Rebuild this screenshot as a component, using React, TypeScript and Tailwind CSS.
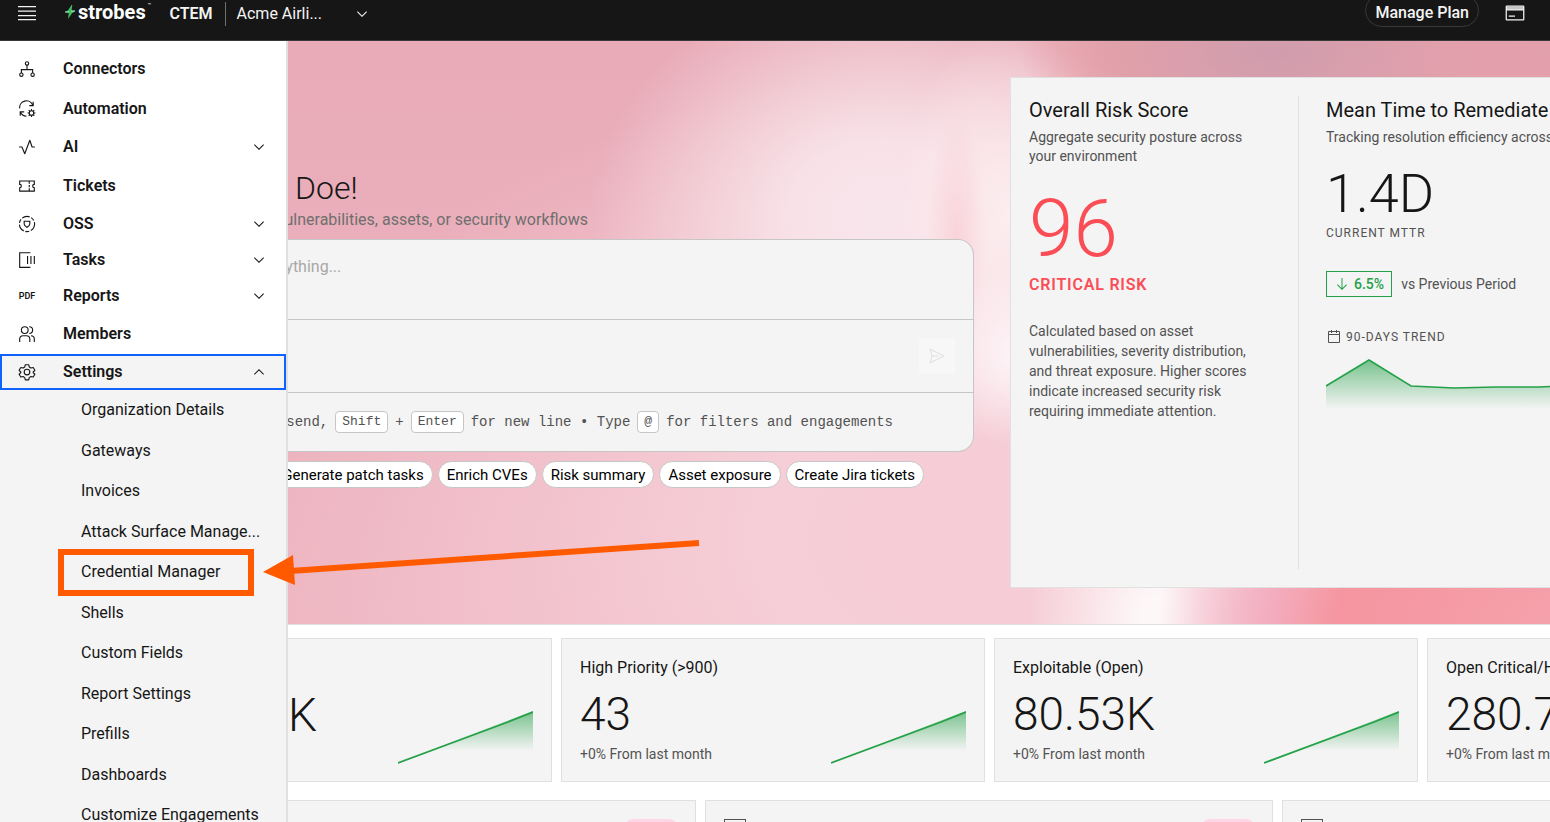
import type { ReactNode } from "react";

const menuItems = [
  { label: "Connectors", icon: "connectors", height: "h-[41px]" },
  { label: "Automation", icon: "automation", height: "h-[39px]" },
  { label: "AI", icon: "ai", height: "h-[38px]", chevron: true },
  { label: "Tickets", icon: "tickets", height: "h-10" },
  { label: "OSS", icon: "oss", height: "h-9", chevron: true },
  { label: "Tasks", icon: "tasks", height: "h-9", chevron: true },
  { label: "Reports", icon: "reports", height: "h-9", chevron: true },
  { label: "Members", icon: "members", height: "h-10" },
];

const settingsItems = [
  "Organization Details",
  "Gateways",
  "Invoices",
  "Attack Surface Manage...",
  "Credential Manager",
  "Shells",
  "Custom Fields",
  "Report Settings",
  "Prefills",
  "Dashboards",
  "Customize Engagements",
];

const prompts = ["Generate patch tasks", "Enrich CVEs", "Risk summary", "Asset exposure", "Create Jira tickets"];

const stats = [
  { title: "High Priority (>900)", value: "43" },
  { title: "Exploitable (Open)", value: "80.53K" },
  { title: "Open Critical/High", value: "280.7K" },
];

function Chevron({ up = false }: { up?: boolean }) {
  return (
    <svg viewBox="0 0 32 32" className={up ? "h-4 w-4 rotate-180" : "h-4 w-4"} fill="currentColor" aria-hidden="true">
      <path d="M16 22 6 12l1.4-1.4 8.6 8.6 8.6-8.6L26 12z" />
    </svg>
  );
}

function LineIcon({ children, size = "h-[18px] w-[18px]" }: { children: ReactNode; size?: string }) {
  return (
    <svg viewBox="0 0 32 32" className={size} fill="none" stroke="currentColor" strokeWidth="2" aria-hidden="true">
      {children}
    </svg>
  );
}

function MenuIcon({ name }: { name: string }) {
  switch (name) {
    case "connectors":
      return (
        <LineIcon>
          <circle cx="16" cy="6" r="3" />
          <circle cx="6" cy="26" r="3" />
          <circle cx="26" cy="26" r="3" />
          <path d="M16 9v8M6 23v-6h20v6" />
        </LineIcon>
      );
    case "automation":
      return (
        <LineIcon>
          <path d="M3 15A12 12 0 0 1 26 9M27 3v7h-7M11 21H4v7M4 21a13 13 0 0 0 11 8" />
          <circle cx="24" cy="23" r="4" />
          <path d="M24 16v3M24 27v3M17 23h3M28 23h3M19 18l2 2M27 26l2 2M29 18l-2 2M21 26l-2 2" />
        </LineIcon>
      );
    case "ai":
      return (
        <LineIcon>
          <path d="M2 16h5l5 12L21 4l4 12h5" strokeLinejoin="round" />
        </LineIcon>
      );
    case "tickets":
      return (
        <LineIcon>
          <path d="M3 7h26v6a3 3 0 0 0 0 6v6H3v-6a3 3 0 0 0 0-6zM20 7v5M20 14v4M20 20v5" />
        </LineIcon>
      );
    case "oss":
      return (
        <LineIcon>
          <circle cx="16" cy="16" r="13.500" strokeDasharray="14 3 7 3" />
          <path d="M11 11h10v5c0 3-2 4-5 6-3-2-5-3-5-6z" />
        </LineIcon>
      );
    case "tasks":
      return (
        <LineIcon>
          <path d="M22 3H3v26h19M17 9v14M23 9v14M29 9v14" />
        </LineIcon>
      );
    case "reports":
      return <span className="text-[9px] font-semibold leading-5">PDF</span>;
    case "members":
      return (
        <LineIcon>
          <circle cx="12" cy="9" r="6" />
          <path d="M3 30v-5a6 6 0 0 1 6-6h6a6 6 0 0 1 6 6v5M20 3a6 6 0 0 1 0 12M23 19a6 6 0 0 1 6 6v5" />
        </LineIcon>
      );
    default:
      return (
        <LineIcon>
          <circle cx="16" cy="16" r="5" />
          <path
            d="M13 3h6l1 4 3 2 4-1 3 5-3 3 0 1 3 3-3 5-4-1-3 2-1 4h-6l-1-4-3-2-4 1-3-5 3-3v-1l-3-3 3-5 4 1 3-2z"
            strokeLinejoin="round"
          />
        </LineIcon>
      );
  }
}

function Header() {
  return (
    <header className="flex h-[41px] items-start overflow-hidden border-b border-[#393939] bg-[#161616] text-[#f4f4f4]">
      <button aria-label="Close menu" className="ml-[17px] mt-1 flex h-[18px] w-5 items-center">
        <svg viewBox="0 0 20 18" className="w-5" fill="none" stroke="currentColor" strokeWidth="1.250" aria-hidden="true">
          <path d="M1 2.500h18M1 7h18M1 11.500h18M1 15.500h18" />
        </svg>
      </button>
      <a href="#home" className="ml-[27px] flex h-6 items-center gap-[2px]" aria-label="strobes">
        <svg viewBox="0 0 12 16" className="h-4 w-3" aria-hidden="true">
          <path d="M7.500 1 4.200 6.200 1 8l3.800.8L4 15l4-5.800L11.500 7l-4-.6.800-5.400z" fill="#42be65" />
          <path d="M1 8h4M7 7h4" stroke="#a7f0ba" strokeWidth="1" />
        </svg>
        <span className="text-xl font-bold leading-6 text-white">strobes</span>
        <span className="self-start text-[6px] leading-[10px]">™</span>
      </a>
      <span className="ml-[18px] mt-[2px] text-base font-semibold leading-6">CTEM</span>
      <button className="ml-3 mt-[2px] flex h-6 items-center border-l border-[#6f6f6f] pl-[11px] text-base leading-6">
        <span className="w-[117px] text-left">Acme Airli...</span>
        <Chevron />
      </button>
      <button className="-mt-[6px] ml-auto h-[33px] rounded-full border border-[#393939] px-[9px] pt-[5px] text-base font-medium leading-6">
        Manage Plan
      </button>
      <button aria-label="Billing" className="ml-[26px] mr-[25px] mt-[3px]">
        <LineIcon size="h-5 w-5">
          <path d="M2 6h28v5H2z" fill="#c6c6c6" stroke="none" />
          <rect x="2" y="5" width="28" height="22" rx="1" />
          <path d="M2 11h28M6 21h10" />
        </LineIcon>
      </button>
    </header>
  );
}

function Sidebar() {
  return (
    <nav className="w-72 shrink-0 border-r-2 border-[#e0e0e0] bg-white pt-[7px] text-[#161616]">
      <ul>
        {menuItems.map((item) => (
          <li key={item.label}>
            <a href="#menu" className={`flex items-center pl-[17px] pr-[19px] text-base font-semibold ${item.height}`}>
              <span className="mr-[26px] flex w-5 justify-center">
                <MenuIcon name={item.icon} />
              </span>
              <span className="flex-1">{item.label}</span>
              {item.chevron && <Chevron />}
            </a>
          </li>
        ))}
      </ul>
      <div className="bg-[#f4f4f4]">
        <button className="flex h-9 w-full items-center border-2 border-[#0f62fe] pl-[15px] pr-[17px] text-left text-base font-semibold">
          <span className="mr-[26px] flex w-5 justify-center">
            <MenuIcon name="settings" />
          </span>
          <span className="flex-1">Settings</span>
          <Chevron up />
        </button>
        <ul className="pb-2">
          {settingsItems.map((label) => (
            <li key={label} className="odd:h-10 even:h-[41px]">
              <a href="#settings" className="flex h-full items-center pl-[81px] text-base">
                {label}
              </a>
            </li>
          ))}
        </ul>
      </div>
    </nav>
  );
}

function Key({ children }: { children: string }) {
  return (
    <kbd className="rounded border border-[#c6c6c6] bg-white px-[6px] font-['Liberation_Mono',monospace] text-[13px] leading-5">
      {children}
    </kbd>
  );
}

function Assistant() {
  return (
    <section className="w-[686px] shrink-0 pt-[127px]">
      <h1 className="pl-[7px] text-[32px] font-light leading-10 text-[#161616]">Doe!</h1>
      <p className="flex w-[300px] justify-end whitespace-nowrap text-base text-[#6f6f6f]">
        vulnerabilities, assets, or security workflows
      </p>
      <div className="mt-[7px] rounded-r-2xl border border-l-0 border-[#c6c6c6] bg-[#f4f4f4]">
        <textarea
          aria-label="Ask anything"
          placeholder="Ask anything..."
          className="-ml-[51px] block h-[79px] w-full resize-none pt-[15px] text-base placeholder:text-[#a8a8a8]"
        />
        <div className="flex h-[74px] items-center justify-end border-y border-[#c6c6c6] pr-[18px]">
          <button aria-label="Send" disabled className="flex h-9 w-9 items-center justify-center bg-[#f7f7f7] text-[#e4e4e4]">
            <svg viewBox="0 0 32 32" className="h-5 w-5" fill="currentColor" aria-hidden="true">
              <path d="m27.450 15.110-22-11a1 1 0 0 0-1.410 1.120L7 16 4 26.740A1 1 0 0 0 5.450 27.890l22-11a1 1 0 0 0 0-1.780zM6.550 25.110 8.760 17H18v-2H8.760L6.550 6.890 24.760 16z" />
            </svg>
          </button>
        </div>
        <p className="flex h-[58px] w-[605px] items-center justify-end gap-[7px] whitespace-nowrap font-['Liberation_Mono',monospace] text-sm text-[#525252]">
          <span>send,</span>
          <Key>Shift</Key>
          <span>+</span>
          <Key>Enter</Key>
          <span>for new line • Type</span>
          <Key>@</Key>
          <span>for filters and engagements</span>
        </p>
      </div>
      <div className="mt-[9px] flex w-[636px] justify-end gap-[5px]">
        {prompts.map((prompt) => (
          <button key={prompt} className="h-[27px] shrink-0 rounded-full border border-[#c6c6c6] bg-white px-2 text-[15px] leading-6">
            {prompt}
          </button>
        ))}
      </div>
    </section>
  );
}

function RiskPanel() {
  return (
    <section className="ml-9 mt-9 flex h-[511px] flex-1 overflow-hidden border border-r-0 border-[#e0e0e0] bg-[#f4f4f4] py-[18px] pl-[18px] text-[#525252]">
      <div className="w-[270px] shrink-0 border-r border-[#e0e0e0]">
        <h2 className="text-xl leading-7 text-[#161616]">Overall Risk Score</h2>
        <p className="mt-1 w-[230px] text-sm leading-[19px]">Aggregate security posture across your environment</p>
        <p className="mt-[23px] text-[80px] font-light leading-[80px] text-[#fa4d56]">96</p>
        <p className="mt-1 text-base font-semibold leading-6 tracking-wider text-[#fa4d56]">CRITICAL RISK</p>
        <p className="mt-6 w-[232px] text-sm leading-5">
          Calculated based on asset vulnerabilities, severity distribution, and threat exposure. Higher scores indicate increased
          security risk requiring immediate attention.
        </p>
      </div>
      <div className="shrink-0 whitespace-nowrap pl-[27px]">
        <h2 className="text-xl leading-7 text-[#161616]">Mean Time to Remediate</h2>
        <p className="mt-1 text-sm leading-[19px]">Tracking resolution efficiency across</p>
        <p className="mt-5 text-[54px] font-light leading-[54px] text-[#161616]">1.4D</p>
        <p className="mt-1 text-xs leading-4 tracking-[1px]">CURRENT MTTR</p>
        <p className="mt-[30px] flex items-center gap-[9px] text-sm">
          <span className="flex h-[26px] items-center gap-1 border border-[#24a148] px-[7px] font-medium text-[#24a148]">
            <svg viewBox="0 0 32 32" className="h-4 w-4" fill="currentColor" aria-hidden="true">
              <path d="M24.590 16.590 17 24.170V4h-2v20.170l-7.590-7.580L6 18l10 10 10-10z" />
            </svg>
            6.5%
          </span>
          vs Previous Period
        </p>
        <p className="mt-8 flex items-center gap-1 text-xs leading-4 tracking-[1px]">
          <LineIcon size="h-4 w-4">
            <path d="M5 5h22v22H5zM5 11h22M11 2v6M21 2v6" />
          </LineIcon>
          90-DAYS TREND
        </p>
        <svg width="320" height="60" viewBox="0 0 320 60" className="mt-3" aria-hidden="true">
          <defs>
            <linearGradient id="trend" x1="0" y1="0" x2="0" y2="1">
              <stop offset="0" stopColor="#24a148" stopOpacity=".6" />
              <stop offset="1" stopColor="#24a148" stopOpacity="0" />
            </linearGradient>
          </defs>
          <path d="M0 29 43 3l42 26 43 2 42-1h43l43-2v24H0z" fill="url(#trend)" />
          <path d="M0 29 43 3l42 26 43 2 42-1h43l43-2" fill="none" stroke="#24a148" strokeWidth="1.500" />
        </svg>
      </div>
    </section>
  );
}

function Sparkline() {
  return (
    <svg width="135" height="55" viewBox="0 0 135 55" className="shrink-0" aria-hidden="true">
      <defs>
        <linearGradient id="spark" x1="0" y1="0" x2="0" y2="1">
          <stop offset="0" stopColor="#24a148" stopOpacity=".6" />
          <stop offset="1" stopColor="#24a148" stopOpacity="0" />
        </linearGradient>
      </defs>
      <path d="M30 42 135 2v40z" fill="url(#spark)" />
      <path d="M0 54 110 13 135 3" fill="none" stroke="#24a148" strokeWidth="1.750" />
    </svg>
  );
}

function StatCards() {
  return (
    <section className="mt-[13px] flex gap-[9px] text-[#161616]">
      <article className="flex h-36 w-[264px] shrink-0 items-end justify-between border border-l-0 border-[#e0e0e0] bg-[#f4f4f4] pb-[17px] pr-[18px]">
        <p className="mb-[21px] text-[46px] font-light leading-[56px]">K</p>
        <Sparkline />
      </article>
      {stats.map((stat) => (
        <article
          key={stat.title}
          className="flex h-36 w-[424px] shrink-0 items-end justify-between border border-[#e0e0e0] bg-[#f4f4f4] px-[18px] pb-[17px]"
        >
          <div className="whitespace-nowrap">
            <h3 className="text-base leading-6">{stat.title}</h3>
            <p className="mb-[2px] mt-[6px] text-[46px] font-light leading-[56px]">{stat.value}</p>
            <p className="text-sm leading-5 text-[#525252]">+0% From last month</p>
          </div>
          <Sparkline />
        </article>
      ))}
    </section>
  );
}

function Widget({ first = false }: { first?: boolean }) {
  return (
    <article
      className={`flex h-40 shrink-0 items-start justify-between border border-[#e0e0e0] bg-[#f4f4f4] px-[18px] pt-[18px] ${
        first ? "w-[408px] border-l-0" : "w-[568px]"
      }`}
    >
      <span className={first ? "invisible" : "h-5 w-[22px] border border-[#525252]"} />
      <span className="h-6 w-[52px] rounded-lg bg-[#ffd6e8]" />
    </article>
  );
}

export default function App() {
  return (
    <div className="flex h-screen flex-col overflow-hidden bg-white font-[Roboto,'Liberation_Sans',sans-serif]">
      <Header />
      <div className="relative flex min-h-0 flex-1">
        <Sidebar />
        <main className="min-w-0 flex-1 overflow-hidden">
          <div className="flex h-[584px] border-b border-[#e0e0e0] bg-[radial-gradient(ellipse_200px_90px_at_78%_2%,#d09dae_0%,transparent_100%),radial-gradient(ellipse_570px_220px_at_103%_0%,#e3a0ad_0%,#e5a1a8_82%,transparent_100%),radial-gradient(ellipse_430px_220px_at_103%_100%,#f5a3ae_0%,#f5959f_58%,#f3b3c5_78%,transparent_100%),radial-gradient(ellipse_130px_180px_at_69%_100%,#fdf7f8_0%,#fdf7f8_15%,transparent_100%),radial-gradient(ellipse_90px_90px_at_58%_54%,#fdf5f8_0%,transparent_100%),radial-gradient(ellipse_30px_130px_at_53%_34%,#f9d3da_0%,transparent_100%),radial-gradient(ellipse_110px_190px_at_57%_30%,#fcedef_0%,transparent_100%),radial-gradient(ellipse_290px_240px_at_47%_30%,#f8e5ec_0%,#f8e2e8_30%,transparent_100%),radial-gradient(ellipse_760px_480px_at_58%_85%,#f6ccd6_0%,#f6ced7_35%,transparent_100%),linear-gradient(180deg,#e8abb7_0%,#eeb6c1_100%)]">
            <Assistant />
            <RiskPanel />
          </div>
          <StatCards />
          <section className="mt-[18px] flex gap-[9px]">
            <Widget first />
            <Widget />
            <Widget />
          </section>
        </main>
        {/* callout on the credential manager entry */}
        <svg width="660" height="70" viewBox="0 0 660 70" className="pointer-events-none absolute left-[50px] top-[490px]" aria-hidden="true">
          <rect x="11" y="21" width="190" height="41" fill="none" stroke="#ff5a00" strokeWidth="6" />
          <path d="M240 40 649 12" stroke="#ff5a00" strokeWidth="6" />
          <path d="m213 41 30-17 2 30z" fill="#ff5a00" />
        </svg>
      </div>
    </div>
  );
}
